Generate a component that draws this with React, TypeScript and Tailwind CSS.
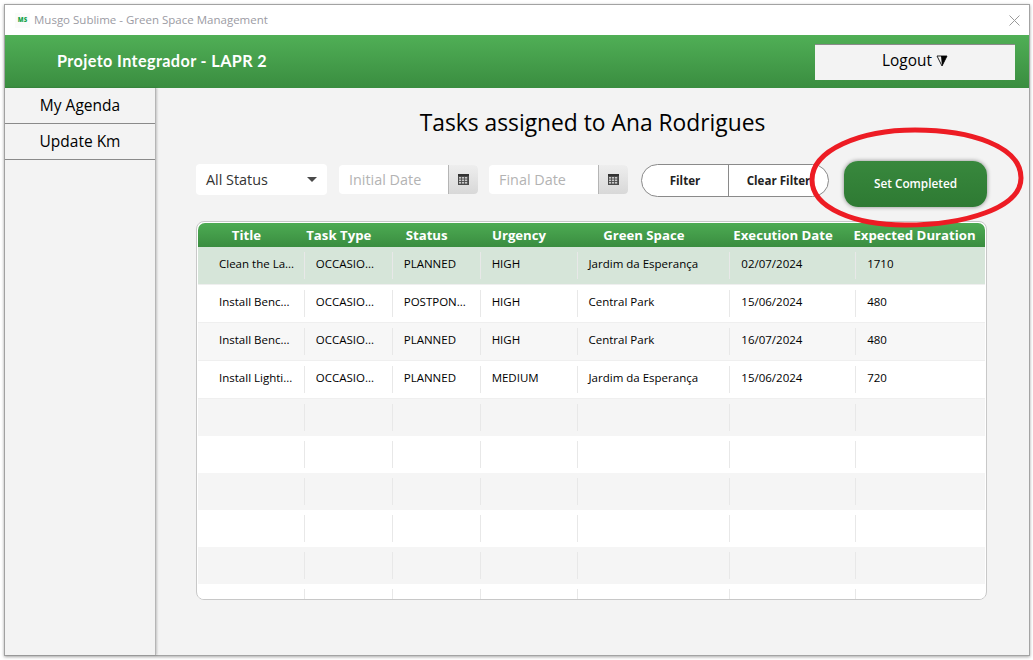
const columns = [
  { name: 'Title', width: 'w-[107px]', pad: 'pl-[21px]', head: 'pr-[10px]' },
  { name: 'Task Type', width: 'w-[88px]', pad: 'pl-[11px]', head: 'pr-[20px]' },
  { name: 'Status', width: 'w-[88px]', pad: 'pl-[11px]', head: 'pr-[20px]' },
  { name: 'Urgency', width: 'w-[97px]', pad: 'pl-[11px]', head: 'pr-[20px]' },
  { name: 'Green Space', width: 'w-[153px]', pad: 'pl-[11px]', head: 'pr-[20px]' },
  { name: 'Execution Date', width: 'w-[126px]', pad: 'pl-[11px]', head: 'pr-[20px]' },
  { name: 'Expected Duration', width: 'w-[129px]', pad: 'pl-[11px]', head: 'pr-[12px]' },
];

const tasks = [
  ['Clean the La...', 'OCCASIO...', 'PLANNED', 'HIGH', 'Jardim da Esperança', '02/07/2024', '1710'],
  ['Install Benc...', 'OCCASIO...', 'POSTPON...', 'HIGH', 'Central Park', '15/06/2024', '480'],
  ['Install Benc...', 'OCCASIO...', 'PLANNED', 'HIGH', 'Central Park', '16/07/2024', '480'],
  ['Install Lighti...', 'OCCASIO...', 'PLANNED', 'MEDIUM', 'Jardim da Esperança', '15/06/2024', '720'],
];

const emptyRows = [0, 1, 2, 3, 4, 5];

function CalendarButton() {
  return (
    <div className="flex w-[30px] items-center justify-center border-l border-[#b5b5b5] bg-gradient-to-b from-[#eeeeee] to-[#d8d8d8]">
      <svg width="11" height="11" viewBox="0 0 11 11">
        <rect x="0" y="0" width="11" height="11" fill="#4a4a4a" />
        <rect x="0" y="0" width="11" height="2" fill="#333333" />
        {[1, 4, 7].map((x) =>
          [3, 5.5, 8].map((y) => (
            <rect key={`${x}-${y}`} x={x} y={y} width="2.2" height="1.6" fill="#c9c9c9" />
          )),
        )}
      </svg>
    </div>
  );
}

function DateField({ placeholder }: { placeholder: string }) {
  return (
    <div className="flex h-[29px] w-[139px] overflow-hidden rounded-[4px] bg-white">
      <div className="flex flex-1 items-center pl-[10px] text-[14.4px] text-[#b3b3b3]">{placeholder}</div>
      <CalendarButton />
    </div>
  );
}

function Row({ cells, rowClass }: { cells: string[]; rowClass: string }) {
  return (
    <div className={`flex shrink-0 ${rowClass}`}>
      {columns.map((col, i) => (
        <div key={col.name} className={`flex items-center py-[5px] ${col.width}`}>
          <div
            className={`flex h-full w-full items-center whitespace-nowrap pb-[3px] text-[11.5px] text-black ${col.pad} ${
              i < 6 ? 'border-r border-[#e8e8e8]' : ''
            }`}
          >
            {cells[i]}
          </div>
        </div>
      ))}
    </div>
  );
}

export default function App() {
  return (
    <div className="relative h-[660px] w-[1033px] overflow-hidden bg-white p-[4px] font-['Open_Sans',sans-serif]">
      <div className="flex h-[652px] w-[1026px] flex-col border border-[#a3a3a3] bg-[#f3f3f3] shadow-[0_1px_3px_rgba(0,0,0,0.35)]">
        {/* Title bar */}
        <div className="flex h-[30px] shrink-0 items-center bg-white pl-[10px] pr-[9px]">
          <div className="flex h-[15px] w-[15px] items-center justify-center bg-[#fbfbfb] text-[6px] font-extrabold leading-none text-[#16a34a]">
            MS
          </div>
          <span className="ml-[4px] text-[11.5px] text-[#9b9ba3]">Musgo Sublime - Green Space Management</span>
          <svg className="ml-auto" width="11" height="11" viewBox="0 0 11 11" stroke="#9a9a9a" strokeWidth="1">
            <path d="M0.5 0.5 L10.5 10.5 M10.5 0.5 L0.5 10.5" />
          </svg>
        </div>

        {/* Header */}
        <div className="flex h-[53px] shrink-0 items-center justify-between bg-gradient-to-b from-[#50af56] to-[#3a8d40] pl-[52px] pr-[14px]">
          <span className="font-['Lato',sans-serif] text-[16.2px] font-bold tracking-[0.4px] text-white">
            Projeto Integrador - LAPR 2
          </span>
          <button className="flex h-[36px] w-[200px] items-center justify-center gap-[4px] border-t border-[#8a8a8a] bg-[#f3f3f3] pb-[3px] text-[15.4px] text-black">
            Logout
            <svg className="mt-[1px]" width="12" height="12" viewBox="0 0 12 12">
              <path d="M1 1 H11 L6 11 Z" fill="none" stroke="#222222" strokeWidth="1" />
              <path d="M5 1 H11 L6 11 Z" fill="#000000" />
            </svg>
          </button>
        </div>

        <div className="flex min-h-0 flex-1">
          {/* Sidebar */}
          <aside className="w-[151px] shrink-0 border-r border-[#b5b5b5] shadow-[1px_0_2px_rgba(0,0,0,0.2)]">
            <div className="flex h-[36px] items-center justify-center border-b border-[#8a8a8a] text-[15.5px] text-black">
              My Agenda
            </div>
            <div className="flex h-[36px] items-center justify-center border-b border-[#8a8a8a] text-[15.5px] text-black">
              Update Km
            </div>
          </aside>

          {/* Main */}
          <main className="flex min-w-0 flex-1 flex-col pl-[40px]">
            <h1 className="-ml-[40px] mt-[17px] h-[36px] text-center text-[22.8px] leading-[36px] text-black">
              Tasks assigned to Ana Rodrigues
            </h1>

            <div className="mt-[20px] flex h-[46px] items-start">
              <div className="mt-[3px] flex h-[31px] w-[131px] items-center justify-between rounded-[4px] bg-white pl-[10px] pr-[10px] text-[14.4px] text-[#333333]">
                All Status
                <span className="h-0 w-0 border-x-[5px] border-t-[5px] border-x-transparent border-t-[#4a4a4a]" />
              </div>
              <div className="ml-[12px] mt-[4px]">
                <DateField placeholder="Initial Date" />
              </div>
              <div className="ml-[11px] mt-[4px]">
                <DateField placeholder="Final Date" />
              </div>
              <div className="ml-[13px] mt-[3px] flex h-[33px] w-[188px] overflow-hidden rounded-full border border-[#8a8a8a] bg-white text-[11.6px] font-bold text-[#222222]">
                <div className="flex w-[87px] items-center justify-center border-r border-[#8a8a8a]">Filter</div>
                <div className="flex flex-1 items-center justify-center">Clear Filter</div>
              </div>
              <button className="ml-[15px] h-[46px] w-[143px] rounded-[14px] bg-gradient-to-b from-[#38883d] to-[#2e7a33] text-[11.8px] font-semibold text-white shadow-[0_0_4px_rgba(0,0,0,0.45)]">
                Set Completed
              </button>
            </div>

            {/* Table */}
            <div className="mt-[14px] flex h-[379px] w-[791px] flex-col overflow-hidden rounded-[8px] border border-[#c8c8c8] bg-white px-[1px] pt-[1px]">
              <div className="flex h-[24px] shrink-0 rounded-t-[7px] bg-gradient-to-b from-[#4dab53] to-[#3a8d40]">
                {columns.map((col) => (
                  <div
                    key={col.name}
                    className={`flex items-center justify-center whitespace-nowrap pt-[1px] text-[13.2px] font-bold text-white ${col.width} ${col.head}`}
                  >
                    {col.name}
                  </div>
                ))}
              </div>
              {tasks.map((task, i) => (
                <Row
                  key={i}
                  cells={task}
                  rowClass={`h-[38px] border-b border-[#efefef] ${
                    i === 0 ? 'bg-[#d6e5d9]' : i === 2 ? 'bg-[#f7f7f7]' : 'bg-white'
                  }`}
                />
              ))}
              {emptyRows.map((r) => (
                <Row
                  key={r}
                  cells={['', '', '', '', '', '', '']}
                  rowClass={`h-[37px] ${r % 2 === 0 ? 'bg-[#f5f5f5]' : 'bg-white'}`}
                />
              ))}
            </div>
          </main>
        </div>
      </div>

      {/* Red annotation around the button */}
      <svg className="pointer-events-none absolute left-[800px] top-[120px]" width="233" height="125" viewBox="0 0 233 125">
        <path
          d="M115 10 C170 10 221 26 221 58 C221 88 165 105 105 105 C55 105 12 88 12 60 C12 30 60 10 115 10 Z"
          fill="none"
          stroke="#ed1c24"
          strokeWidth="5"
        />
      </svg>
    </div>
  );
}
